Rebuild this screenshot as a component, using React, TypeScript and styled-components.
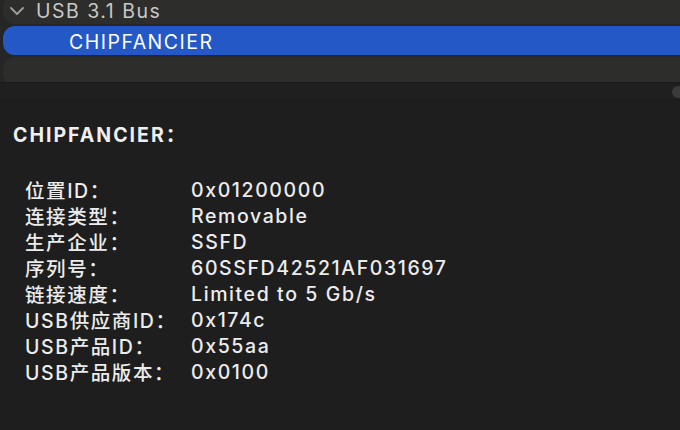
import styled, { createGlobalStyle } from 'styled-components';

const GlobalStyle = createGlobalStyle`
  html,
  body {
    margin: 0;
    padding: 0;
    background: #1e1e1e;
  }
  body {
    font-family: Inter, 'Noto Sans CJK SC', sans-serif;
  }
`;

const details: Array<[string, string]> = [
  ['位置ID：', '0x01200000'],
  ['连接类型：', 'Removable'],
  ['生产企业：', 'SSFD'],
  ['序列号：', '60SSFD42521AF031697'],
  ['链接速度：', 'Limited to 5 Gb/s'],
  ['USB供应商ID：', '0x174c'],
  ['USB产品ID：', '0x55aa'],
  ['USB产品版本：', '0x0100'],
];

function Chevron() {
  return (
    <svg width="16" height="10" viewBox="0 0 16 10">
      <path d="M2 2 L8 8 L14 2" fill="none" stroke="#9b9b9b" strokeWidth="2" strokeLinecap="round" strokeLinejoin="round" />
    </svg>
  );
}

export default function App() {
  return (
    <>
      <GlobalStyle />
      <Window>
        <TreePane>
          <TreeList>
            <TreeRow>
              <ChevronSlot>
                <Chevron />
              </ChevronSlot>
              <RowLabel>USB 3.1 Bus</RowLabel>
            </TreeRow>
            <TreeRow $selected $indent={66}>
              <RowLabel $selected>CHIPFANCIER</RowLabel>
            </TreeRow>
            <TreeRow />
          </TreeList>
        </TreePane>
        <ScrollBand>
          <ScrollThumb />
        </ScrollBand>
        <DetailPane>
          <DetailTitle>CHIPFANCIER：</DetailTitle>
          <DetailGrid>
            {details.map(([label, value]) => (
              <DetailRow key={label}>
                <DetailLabel>{label}</DetailLabel>
                <DetailValue>{value}</DetailValue>
              </DetailRow>
            ))}
          </DetailGrid>
        </DetailPane>
      </Window>
    </>
  );
}

const Window = styled.div`
  width: 680px;
  height: 430px;
  display: flex;
  flex-direction: column;
  overflow: hidden;
  background: #1e1e1e;
`;

const TreePane = styled.div`
  height: 82px;
  flex: 0 0 auto;
  overflow: hidden;
  background: #262626;
`;

const TreeList = styled.div`
  display: flex;
  flex-direction: column;
  gap: 2px;
  margin-top: -5px;
`;

interface TreeRowProps {
  $selected?: boolean;
  $indent?: number;
}

const TreeRow = styled.div<TreeRowProps>`
  height: 29px;
  margin-left: 3px;
  margin-right: -20px;
  padding-left: ${({ $indent }) => ($indent ? `${$indent}px` : '6px')};
  display: flex;
  align-items: center;
  gap: 11px;
  border-radius: 12px 0 0 12px;
  background: ${({ $selected }) => ($selected ? '#2458c7' : '#2d2d2b')};
`;

const ChevronSlot = styled.span`
  display: flex;
  align-items: center;
  padding-top: 2px;
`;

const RowLabel = styled.span<{ $selected?: boolean }>`
  font-size: 19.5px;
  line-height: 20px;
  letter-spacing: 1.5px;
  color: ${({ $selected }) => ($selected ? '#ffffff' : '#c8c8c8')};
  padding-top: 2px;
`;

const ScrollBand = styled.div`
  height: 17px;
  flex: 0 0 auto;
  position: relative;
  background: #1f1f1f;
  border-top: 1px solid #1a1a1a;
  border-bottom: 1px solid #1a1a1a;
`;

const ScrollThumb = styled.div`
  position: absolute;
  right: -4px;
  top: 3px;
  width: 12px;
  height: 12px;
  border-radius: 50%;
  background: #3b3b3b;
`;

const DetailPane = styled.div`
  flex: 1 1 auto;
  padding: 22px 0 0 13px;
  color: #ececec;
`;

const DetailTitle = styled.div`
  font-size: 19.5px;
  font-weight: 700;
  letter-spacing: 2px;
  color: #efefef;
  line-height: 24px;
`;

const DetailGrid = styled.div`
  display: flex;
  flex-direction: column;
  padding: 28px 0 0 12px;
`;

const DetailRow = styled.div`
  display: grid;
  grid-template-columns: 166px auto;
  height: 26px;
  align-items: center;
  font-size: 19.5px;
  font-weight: 450;
  letter-spacing: 1.6px;
`;

const DetailLabel = styled.span`
  white-space: nowrap;
`;

const DetailValue = styled.span`
  white-space: nowrap;
`;
